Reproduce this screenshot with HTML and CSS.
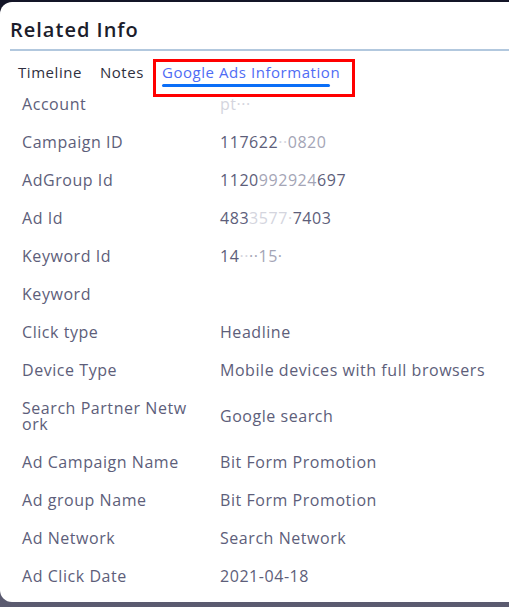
FILE: index.html
```html
<!DOCTYPE html>
<html lang="en">
<head>
<meta charset="utf-8">
<title>Related Info</title>
<link rel="stylesheet" href="styles.css">
</head>
<body>
<div class="panel">
  <h2 class="title">Related Info</h2>
  <div class="divider"></div>
  <nav class="tabs">
    <span class="tab">Timeline</span>
    <span class="tab">Notes</span>
    <span class="tab tab-active">Google Ads Information<span class="ink"></span><span class="highlight"></span></span>
  </nav>
  <div class="rows">
    <div class="row"><div class="label">Account</div><div class="value"><span class="fade">pt···</span></div></div>
    <div class="row"><div class="label">Campaign ID</div><div class="value">117622<span class="fade">··</span><span class="mid">0820</span></div></div>
    <div class="row"><div class="label">AdGroup Id</div><div class="value">1120<span class="mid">992924</span>697</div></div>
    <div class="row"><div class="label">Ad Id</div><div class="value">483<span class="fade">3577·</span>7403</div></div>
    <div class="row"><div class="label">Keyword Id</div><div class="value">14<span class="fade">··</span><span class="mid">··15·</span></div></div>
    <div class="row"><div class="label">Keyword</div><div class="value"></div></div>
    <div class="row"><div class="label">Click type</div><div class="value">Headline</div></div>
    <div class="row"><div class="label">Device Type</div><div class="value">Mobile devices with full browsers</div></div>
    <div class="row"><div class="label">Search Partner Network</div><div class="value">Google search</div></div>
    <div class="row"><div class="label">Ad Campaign Name</div><div class="value">Bit Form Promotion</div></div>
    <div class="row"><div class="label">Ad group Name</div><div class="value">Bit Form Promotion</div></div>
    <div class="row"><div class="label">Ad Network</div><div class="value">Search Network</div></div>
    <div class="row"><div class="label">Ad Click Date</div><div class="value">2021-04-18</div></div>
  </div>
</div>
</body>
</html>
```
FILE: styles.css
```css
* { box-sizing: border-box; }
html, body { margin: 0; padding: 0; }
body {
  width: 509px;
  height: 607px;
  overflow: hidden;
  background: linear-gradient(to bottom, #131527 0%, #2d2f45 50%, #5b5b70 100%);
  font-family: "Open Sans", "Liberation Sans", sans-serif;
}
.panel {
  margin-top: 2px;
  width: 530px;
  height: 600px;
  background: #ffffff;
  border-radius: 12px 0 0 12px;
  padding-left: 10px;
}
.title {
  margin: 0;
  padding-top: 16px;
  height: 47px;
  font-size: 20px;
  line-height: 24px;
  font-weight: 600;
  color: #1c1d2b;
  letter-spacing: 1px;
}
.divider {
  height: 2px;
  background: #b2c8de;
}
.tabs {
  display: flex;
  height: 37px;
  padding-left: 8px;
  padding-top: 11px;
  font-size: 15px;
  line-height: 20px;
  letter-spacing: 0.55px;
  color: #2f3040;
}
.tab { margin-right: 18px; position: relative; }
.tab-active { color: #4f6cf4; }
.ink {
  display: block;
  margin-top: 2px;
  width: 168px;
  height: 3px;
  border-radius: 2px;
  background: #0a6ef7;
}
.highlight {
  position: absolute;
  left: -9px;
  top: -3px;
  width: 202px;
  height: 38px;
  border: 3px solid #ff0000;
}
.rows { margin-top: -3px; padding-left: 12px; }
.row {
  display: grid;
  grid-template-columns: 198px 1fr;
  padding: 11px 0;
  font-size: 16px;
  line-height: 16px;
  letter-spacing: 0.55px;
  color: #5d5e7a;
}
.label { padding-right: 27px; word-break: break-all; }
.value { display: flex; align-items: center; }
.fade { color: #d4d5de; }
.mid { color: #a4a5b6; }
```
